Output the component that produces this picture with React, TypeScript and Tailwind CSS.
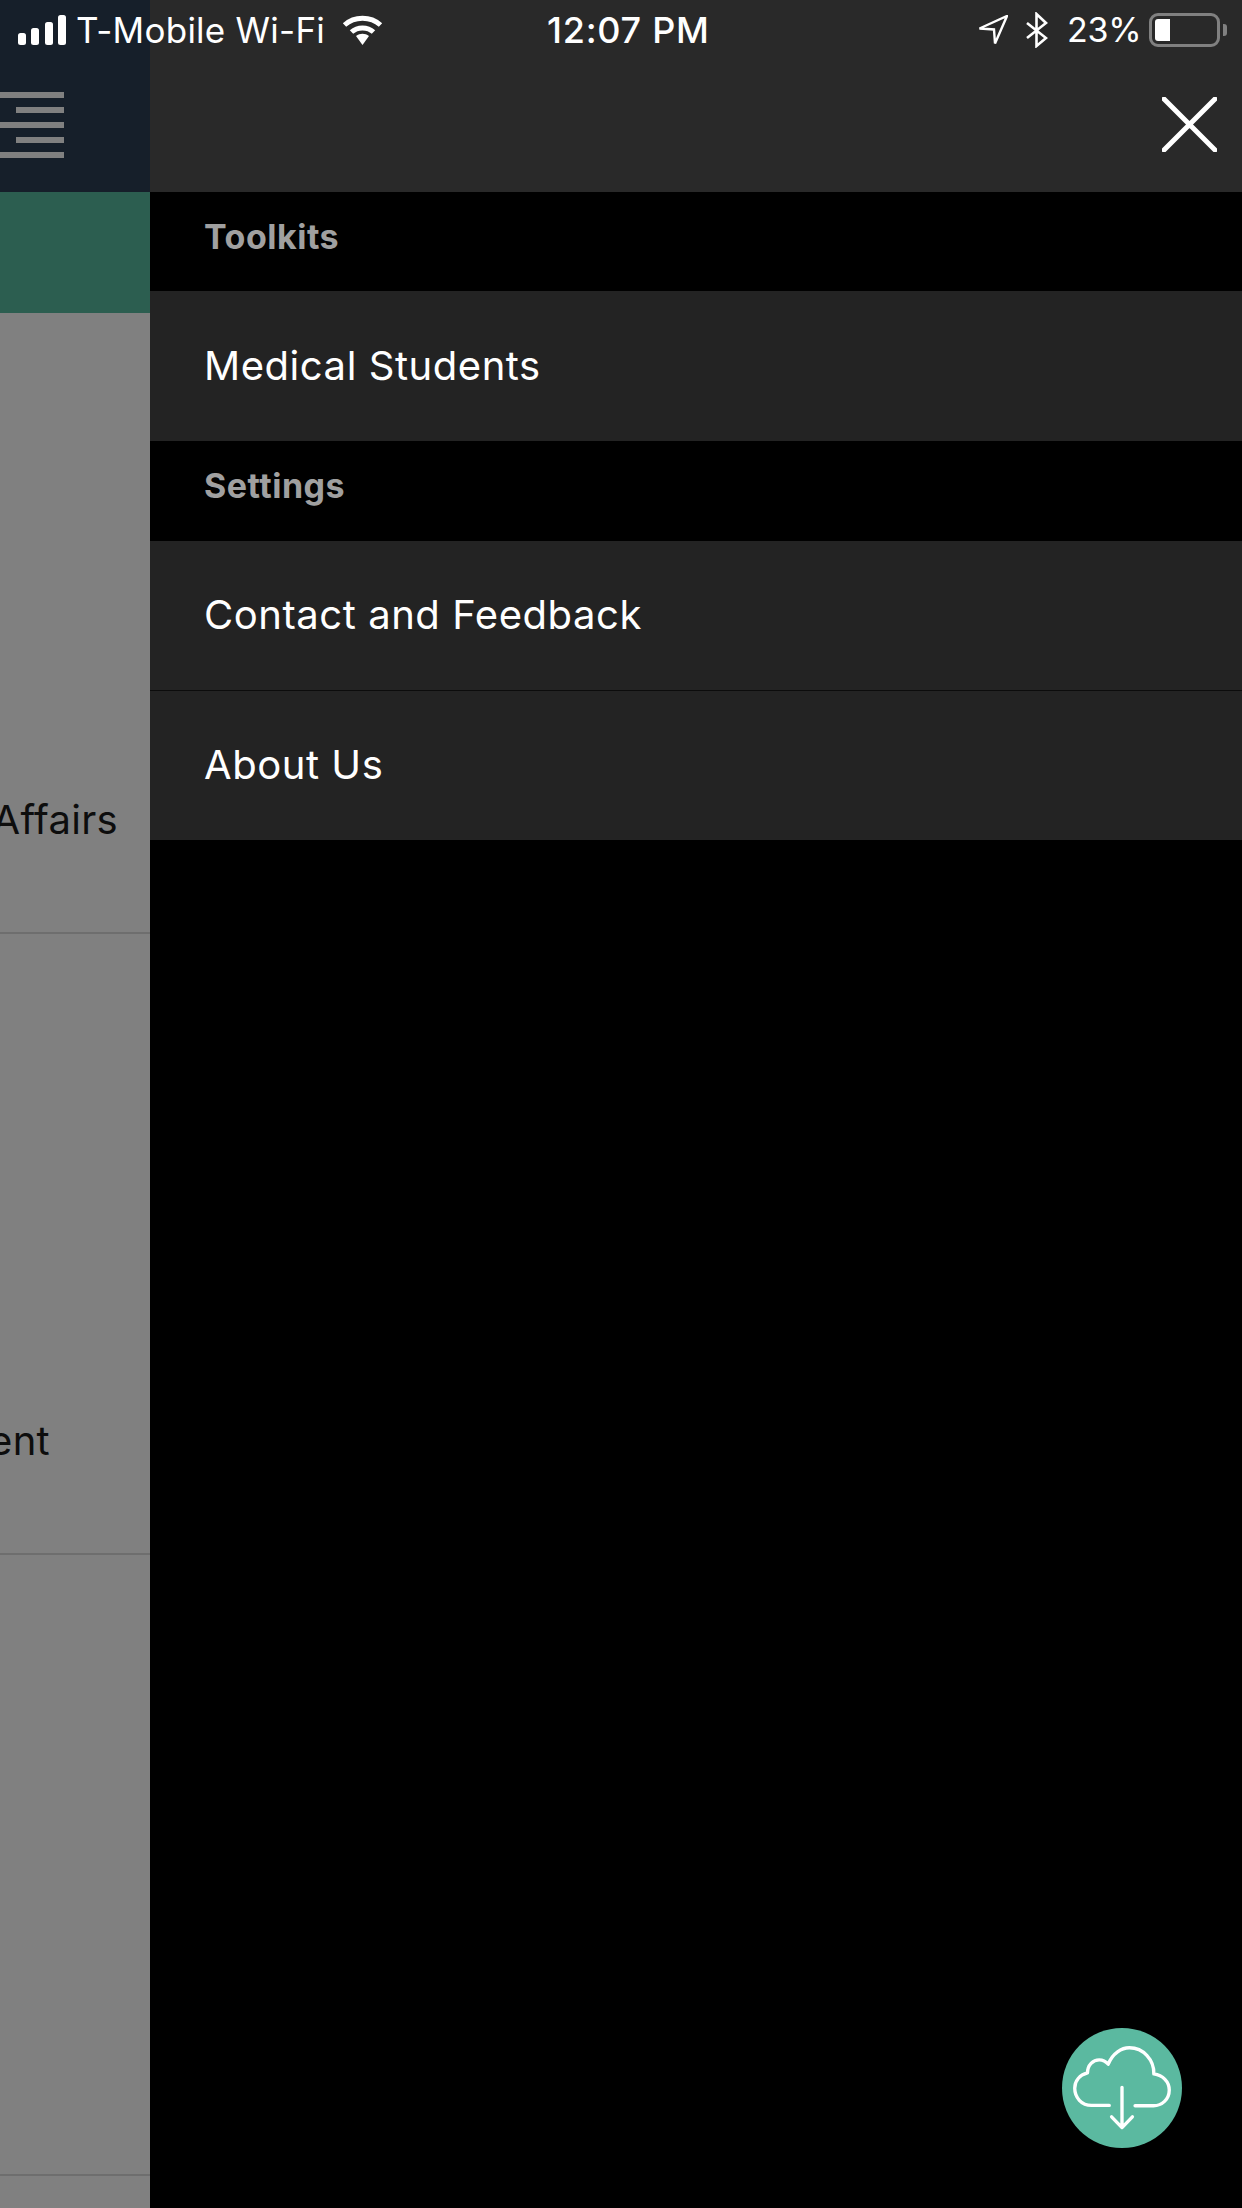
export default function App() {
  const rowCls = "flex h-[621px] shrink-0 items-end justify-end border-b-2 border-[#6e6e6e]";
  const itemCls = "flex items-center pl-[54px] text-[40px] font-[370] tracking-[0.55px] text-white bg-[#232323]";
  const headCls = "flex items-start bg-black pl-[54px] pt-[22px] text-[34px] leading-[46px] font-bold tracking-[0.5px] text-[#a0a0a0]";
  return (
    <div className="relative flex h-[2208px] w-[1242px] overflow-hidden bg-black font-['Inter',sans-serif]">
      {/* page behind the drawer */}
      <div className="flex w-[150px] shrink-0 flex-col overflow-hidden bg-[#808080]">
        <div className="flex h-[192px] shrink-0 flex-col items-end justify-start gap-[9px] bg-[#161f2a] pr-[86px] pt-[92px]">
          <div className="h-[6px] w-[64px] bg-[#808080]" />
          <div className="h-[6px] w-[48px] bg-[#808080]" />
          <div className="h-[6px] w-[64px] bg-[#808080]" />
          <div className="h-[6px] w-[48px] bg-[#808080]" />
          <div className="h-[6px] w-[64px] bg-[#808080]" />
        </div>
        <div className="h-[121px] shrink-0 bg-[#2c5e50]" />
        <div className={`${rowCls} pb-[88px] pr-[32px]`}>
          <span className="text-[40px] font-[370] leading-[48px] tracking-[0.3px] text-[#0d0d0d]">Affairs</span>
        </div>
        <div className={`${rowCls} pb-[88px] pr-[100px]`}>
          <span className="text-[40px] font-[370] leading-[48px] tracking-[0.3px] text-[#0d0d0d]">ent</span>
        </div>
        <div className={rowCls} />
      </div>

      {/* drawer */}
      <div className="flex flex-1 flex-col bg-black">
        <div className="flex h-[192px] shrink-0 items-start justify-end bg-[#292929] pr-[25px] pt-[97px]">
          <svg width="55" height="55" viewBox="0 0 55 55" fill="none" stroke="#fff" strokeWidth="5" strokeLinecap="round">
            <path d="M2 2 L53 53 M53 2 L2 53" />
          </svg>
        </div>
        <div className={`${headCls} h-[99px]`}>Toolkits</div>
        <div className={`${itemCls} h-[150px]`}>Medical Students</div>
        <div className={`${headCls} h-[100px]`}>Settings</div>
        <div className={`${itemCls} h-[149px] pb-[2px]`}>Contact and Feedback</div>
        <div className="h-px bg-[#0c0c0c]" />
        <div className={`${itemCls} h-[149px] pb-[2px]`}>About Us</div>
      </div>

      {/* status bar */}
      <div className="absolute left-0 top-0 flex h-[60px] w-[1242px] items-center text-[35px] font-[370] leading-[40px] text-white">
        <svg className="ml-[18px] shrink-0" width="48" height="30" viewBox="0 0 48 30" fill="#fff">
          <rect x="0" y="18" width="8" height="12" rx="2.5" />
          <rect x="13" y="13" width="8" height="17" rx="2.5" />
          <rect x="27" y="7" width="8" height="23" rx="2.5" />
          <rect x="40" y="0" width="8" height="30" rx="2.5" />
        </svg>
        <span className="ml-[10px] w-[248px] shrink-0 whitespace-nowrap tracking-[0.25px]">T-Mobile Wi-Fi</span>
        <svg className="ml-[18px] shrink-0" width="41" height="30" viewBox="0 0 41 30" fill="none">
          <path d="M2.5 10 C12.5 1 28.5 1 38.5 10" stroke="#fff" strokeWidth="5" />
          <path d="M9.5 17 C15.5 11.5 25.5 11.5 31.5 17" stroke="#fff" strokeWidth="5" />
          <path d="M14 21 C18 18 23 18 27 21 L20.5 30 Z" fill="#fff" />
        </svg>
        <span className="ml-[164px] w-[160px] shrink-0 whitespace-nowrap text-[36px] font-medium tracking-[0.75px]">12:07 PM</span>
        <svg className="ml-[271px] shrink-0" width="30" height="30" viewBox="0 0 30 30" fill="none" stroke="#fff" strokeWidth="2.4">
          <path d="M29 1 L1.5 13.5 L16 14.5 L17 28.5 Z" />
        </svg>
        <svg className="ml-[18px] shrink-0" width="22" height="36" viewBox="0 0 22 36" fill="none" stroke="#fff" strokeWidth="2.6">
          <path d="M1 11 L20 26 L10.500 34 L10.500 2 L20 11 L1 26" />
        </svg>
        <span className="ml-[19px] w-[71px] shrink-0 whitespace-nowrap text-[34px] tracking-[-0.2px]">23%</span>
        <div className="relative ml-[11px] h-[34px] w-[71px] shrink-0 rounded-[9px] border-[3px] border-[#808080]">
          <div className="ml-[3px] mt-[3px] h-[22px] w-[15px] rounded-l-[3px] bg-white" />
          <div className="absolute left-[71px] top-[8px] h-[12px] w-[4px] rounded-r-[3px] bg-[#808080]" />
        </div>
      </div>

      {/* floating download button */}
      <div className="absolute left-[1062px] top-[2028px] flex h-[120px] w-[120px] items-center justify-center rounded-full bg-[#5bb9a0]">
        <svg width="120" height="120" viewBox="67 55 358 358" fill="none" stroke="#fff" strokeWidth="10" strokeLinecap="round" strokeLinejoin="round">
          <path d="M208 286 L155 286 C125 286 105 262 105 235 C105 212 120 195 143 189 C143 165 160 150 178 150 C190 150 198 155 205 163 C218 130 245 114 268 114 C310 114 342 150 341 192 C368 196 387 215 387 240 C387 268 365 287 340 287 L285 287" />
          <path d="M246 232 L246 350 M215 320 L246 352 L277 320" />
        </svg>
      </div>
    </div>
  );
}
